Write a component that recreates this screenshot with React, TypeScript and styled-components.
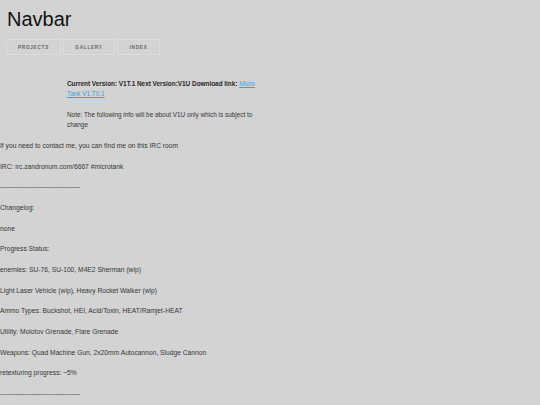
import React from "react";
import styled, { createGlobalStyle } from "styled-components";

const Global = createGlobalStyle`
  html, body { margin: 0; padding: 0; background: #d3d3d3; }
  body { font-family: "Liberation Sans", Arial, sans-serif; }
`;

const Page = styled.div`
  background: #d3d3d3;
  min-height: 405px;
`;

const Header = styled.header`
  padding: 8px 0 0 7px;
`;

const Title = styled.h1`
  margin: 0;
  font-size: 20px;
  font-weight: 400;
  line-height: 23px;
  color: #111;
`;

const Nav = styled.nav`
  display: flex;
  gap: 2px;
  margin: 8px 0 0 -1px;
`;

const NavButton = styled.a<{ $w: number }>`
  box-sizing: border-box;
  width: ${(p) => p.$w}px;
  height: 16px;
  display: flex;
  align-items: center;
  justify-content: center;
  border: 1px solid #dcdcdc;
  font-size: 4.6px;
  font-weight: 700;
  letter-spacing: 0.8px;
  color: #666;
  text-transform: uppercase;
`;

const Content = styled.main`
  display: flex;
  flex-direction: column;
  gap: 10.33px;
  margin-top: 24px;
  font-size: 6.7px;
  line-height: 10.33px;
  color: #363636;
`;

const Intro = styled.div`
  display: flex;
  flex-direction: column;
  gap: 10.33px;
  margin-left: 67px;
  width: 220px;
  font-size: 6.4px;
`;

const P = styled.p`
  margin: 0;
`;

const Strong = styled.strong`
  color: #262626;
`;

const Link = styled.a`
  color: #3b9fd6;
  text-decoration: underline;
`;

const dashes = "-".repeat(36);

const lines = [
  "If you need to contact me, you can find me on this IRC room",
  "IRC: irc.zandronum.com/6667 #microtank",
  dashes,
  "Changelog:",
  "none",
  "Progress Status:",
  "enemies: SU-76, SU-100, M4E2 Sherman (wip)",
  "Light Laser Vehicle (wip), Heavy Rocket Walker (wip)",
  "Ammo Types: Buckshot, HEI, Acid/Toxin, HEAT/Ramjet-HEAT",
  "Utility: Molotov Grenade, Flare Grenade",
  "Weapons: Quad Machine Gun, 2x20mm Autocannon, Sludge Cannon",
  "retexturing progress: ~5%",
  dashes,
];

export default function App() {
  return (
    <Page>
      <Global />
      <Header>
        <Title>Navbar</Title>
        <Nav>
          <NavButton $w={55}>Projects</NavButton>
          <NavButton $w={52}>Gallery</NavButton>
          <NavButton $w={43}>Index</NavButton>
        </Nav>
      </Header>
      <Content>
        <Intro>
          <P>
            <Strong>Current Version: V1T.1 Next Version:V1U Download link:</Strong>{" "}
            <Link href="#">
              Micro
              <br />
              Tank V1.T0.1
            </Link>
          </P>
          <P>
            Note: The following info will be about V1U only which is subject to
            <br />
            change
          </P>
        </Intro>
        {lines.map((t, i) => (
          <P key={i}>{t}</P>
        ))}
      </Content>
    </Page>
  );
}
